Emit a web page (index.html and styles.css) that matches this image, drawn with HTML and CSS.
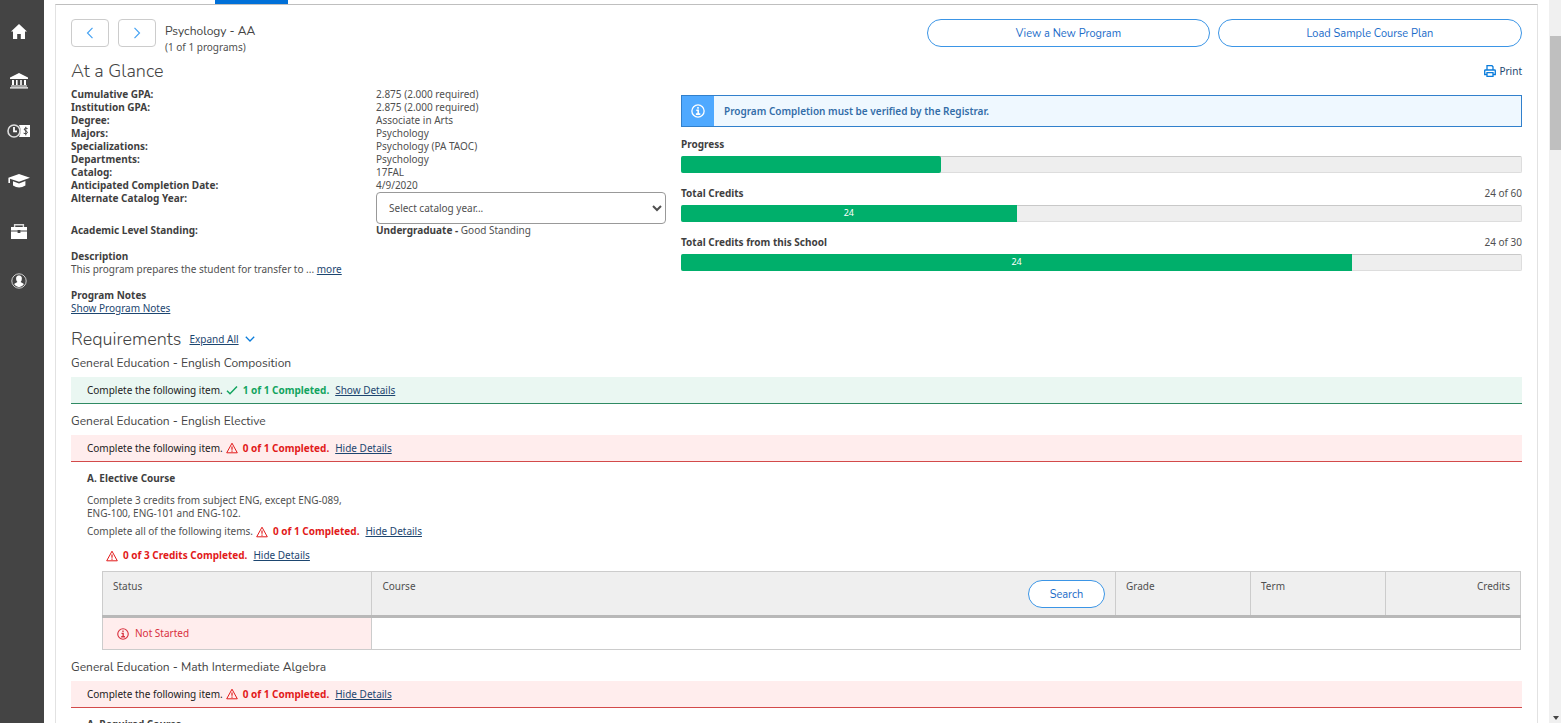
FILE: index.html
```html
<!DOCTYPE html>
<html lang="en">
<head>
    <meta charset="UTF-8">
    <meta name="viewport" content="width=device-width, initial-scale=1.0">
    <title>My Progress</title>
    <link rel="stylesheet" href="styles.css">
</head>
<body>
    <!-- shared icons -->
    <svg class="sprite" aria-hidden="true">
        <symbol id="icon-warning" viewBox="0 0 12 12">
            <path d="M6 1.2 11.3 10.8H.7Z" fill="none" stroke="currentColor" stroke-linejoin="round"/>
            <path d="M6 4.4v3.4M6 8.6v1.1" stroke="currentColor" stroke-width="1.2"/>
        </symbol>
        <symbol id="icon-info" viewBox="0 0 16 16">
            <circle cx="8" cy="8" r="7" fill="none" stroke="currentColor" stroke-width="1.5"/>
            <path d="M8 3.4v2M6 7.2H8.2v4M5.6 11.6h5" fill="none" stroke="currentColor" stroke-width="1.8"/>
        </symbol>
    </svg>

    <nav class="sidebar">
        <a href="#" aria-label="Home">
            <svg width="16" height="15" viewBox="0 0 16 15"><path d="M8 0 16 7.4H14V15H9.8V10H6.2V15H2V7.4H0Z" fill="#fff"/></svg>
        </a>
        <a href="#" aria-label="Financial Information">
            <svg width="20" height="16" viewBox="0 0 20 16"><path d="M10 0 19 4.6V6H1V4.6ZM3 7H5V12H3ZM7 7H8.6V12H7ZM11.2 7H12.8V12H11.2ZM15 7H17V12H15ZM2 12.4H18V13.4H2ZM1 14.2H19V15.6H1Z" fill="#fff"/></svg>
        </a>
        <a href="#" aria-label="Employment">
            <svg width="24" height="14" viewBox="0 0 24 14">
                <circle cx="7" cy="7" r="6" fill="none" stroke="#ddd" stroke-width="1.6"/>
                <path d="M7 3V7.4H10" fill="none" stroke="#fff" stroke-width="1.8"/>
                <path d="M12 1H23V13H12Q15.4 7 12 1Z" fill="#fff"/>
                <path d="M20.6 4.6Q18 3.4 17.2 5C16.8 7 20.8 6.6 20.4 8.8Q19.4 10.6 16.6 9.2M18.8 2.8V11.4" fill="none" stroke="#444"/>
            </svg>
        </a>
        <a href="#" aria-label="Academics">
            <svg width="22" height="14" viewBox="0 0 22 14"><path d="M11 0 22 3.8 11 7.8 2 4.8V9H.4V3.8ZM5 7.2 11 9.4 17.4 7V11.4Q11 15.6 5 11.4Z" fill="#fff"/></svg>
        </a>
        <a href="#" aria-label="Career">
            <svg width="18" height="15" viewBox="0 0 18 15"><path d="M4.6 3V.8H13.4V3" fill="none" stroke="#ddd" stroke-width="1.4"/><path d="M1 3H17V6.6H10.4V6H7.6V6.6H1ZM1 7.6H7.6V9H10.4V7.6H17V15H1Z" fill="#fff"/></svg>
        </a>
        <a href="#" aria-label="User Options">
            <svg width="16" height="16" viewBox="0 0 16 16">
                <circle cx="8" cy="8" r="7.2" fill="none" stroke="#ccc"/>
                <path d="M8 2.4C5 2.4 4.8 5 5.4 7.4L6.4 9 3 11Q5 14.2 8 14.2T13 11L9.6 9 10.6 7.4C11.2 5 11 2.4 8 2.4Z" fill="#fff"/>
            </svg>
        </a>
    </nav>

    <main class="content">
        <div class="tabs"><span class="tab-active"></span></div>

        <div class="panel">
            <header class="program-header">
                <button class="btn-arrow" aria-label="Previous program">
                    <svg width="8" height="12" viewBox="0 0 8 12"><path d="M6.5.8 1.5 6l5 5.2" fill="none" stroke="#47a3f3" stroke-width="1.2"/></svg>
                </button>
                <button class="btn-arrow" aria-label="Next program">
                    <svg width="8" height="12" viewBox="0 0 8 12"><path d="M1.5.8 6.5 6l-5 5.2" fill="none" stroke="#47a3f3" stroke-width="1.2"/></svg>
                </button>
                <div class="program-title">
                    <h2>Psychology - AA</h2>
                    <span>(1 of 1 programs)</span>
                </div>
                <div class="actions">
                    <button class="btn">View a New Program</button>
                    <button class="btn">Load Sample Course Plan</button>
                </div>
            </header>

            <div class="glance-header">
                <h1>At a Glance</h1>
                <a href="#" class="print">
                    <svg width="12" height="12" viewBox="0 0 12 12"><path d="M3 5V.7H8L9 1.8V5M2.6 9.5H.7V5.6Q.7 5 1.4 5H10.6Q11.3 5 11.3 5.6V9.5H9.4M3 7.6H9V11.3H3Z" fill="none" stroke="#0a7cdb" stroke-width="1.3"/></svg>
                    Print
                </a>
            </div>

            <div class="glance">
                <div>
                    <dl class="facts">
                        <dt>Cumulative GPA:</dt><dd>2.875 (2.000 required)</dd>
                        <dt>Institution GPA:</dt><dd>2.875 (2.000 required)</dd>
                        <dt>Degree:</dt><dd>Associate in Arts</dd>
                        <dt>Majors:</dt><dd>Psychology</dd>
                        <dt>Specializations:</dt><dd>Psychology (PA TAOC)</dd>
                        <dt>Departments:</dt><dd>Psychology</dd>
                        <dt>Catalog:</dt><dd>17FAL</dd>
                        <dt>Anticipated Completion Date:</dt><dd>4/9/2020</dd>
                        <dt><label for="catalog-year">Alternate Catalog Year:</label></dt>
                        <dd>
                            <select id="catalog-year">
                                <option>Select catalog year...</option>
                            </select>
                        </dd>
                        <dt>Academic Level Standing:</dt><dd><b>Undergraduate -</b> Good Standing</dd>
                    </dl>
                    <div class="note">
                        <h4>Description</h4>
                        This program prepares the student for transfer to ... <a href="#">more</a>
                    </div>
                    <div class="note">
                        <h4>Program Notes</h4>
                        <a href="#">Show Program Notes</a>
                    </div>
                </div>

                <div class="status">
                    <div class="alert">
                        <span class="alert-icon"><svg width="14" height="14"><use href="#icon-info"/></svg></span>
                        <p>Program Completion must be verified by the Registrar.</p>
                    </div>
                    <div class="meter">
                        <div class="meter-label"><b>Progress</b></div>
                        <div class="bar"><div class="fill rounded" style="width: 31%"></div></div>
                    </div>
                    <div class="meter">
                        <div class="meter-label"><b>Total Credits</b><span>24 of 60</span></div>
                        <div class="bar"><div class="fill" style="width: 40%">24</div></div>
                    </div>
                    <div class="meter">
                        <div class="meter-label"><b>Total Credits from this School</b><span>24 of 30</span></div>
                        <div class="bar"><div class="fill" style="width: 80%">24</div></div>
                    </div>
                </div>
            </div>

            <div class="requirements-header">
                <h1>Requirements</h1>
                <a href="#">Expand All</a>
                <svg width="10" height="6" viewBox="0 0 10 6"><path d="M.8.8 5 5 9.2.8" fill="none" stroke="#0a7cdb" stroke-width="1.3"/></svg>
            </div>

            <section class="requirement">
                <h3>General Education - English Composition</h3>
                <div class="summary complete">
                    Complete the following item.
                    <svg class="icon" width="12" height="12" viewBox="0 0 12 12"><path d="M1 6.8 4 9.8 11 2.6" fill="none" stroke="currentColor" stroke-width="1.5"/></svg>
                    <b>1 of 1 Completed.</b>
                    <a href="#">Show Details</a>
                </div>
            </section>

            <section class="requirement">
                <h3>General Education - English Elective</h3>
                <div class="summary incomplete">
                    Complete the following item.
                    <svg class="icon" width="12" height="12"><use href="#icon-warning"/></svg>
                    <b>0 of 1 Completed.</b>
                    <a href="#">Hide Details</a>
                </div>
                <div class="details">
                    <h4>A. Elective Course</h4>
                    <p>Complete 3 credits from subject ENG, except ENG-089,<br>ENG-100, ENG-101 and ENG-102.</p>
                    <div class="line incomplete">
                        Complete all of the following items.
                        <svg class="icon" width="12" height="12"><use href="#icon-warning"/></svg>
                        <b>0 of 1 Completed.</b>
                        <a href="#">Hide Details</a>
                    </div>
                    <div class="line nested incomplete">
                        <svg class="icon" width="12" height="12"><use href="#icon-warning"/></svg>
                        <b>0 of 3 Credits Completed.</b>
                        <a href="#">Hide Details</a>
                    </div>
                    <table class="courses">
                        <thead>
                            <tr>
                                <th class="col-status">Status</th>
                                <th>
                                    <div class="course-head">Course <button class="btn btn-search">Search</button></div>
                                </th>
                                <th class="col-small">Grade</th>
                                <th class="col-small">Term</th>
                                <th class="col-small credits">Credits</th>
                            </tr>
                        </thead>
                        <tbody>
                            <tr>
                                <td class="not-started">
                                    <div class="state"><svg width="12" height="12"><use href="#icon-info"/></svg> Not Started</div>
                                </td>
                                <td colspan="4"></td>
                            </tr>
                        </tbody>
                    </table>
                </div>
            </section>

            <section class="requirement">
                <h3>General Education - Math Intermediate Algebra</h3>
                <div class="summary incomplete">
                    Complete the following item.
                    <svg class="icon" width="12" height="12"><use href="#icon-warning"/></svg>
                    <b>0 of 1 Completed.</b>
                    <a href="#">Hide Details</a>
                </div>
                <div class="details">
                    <h4>A. Required Course</h4>
                </div>
            </section>
        </div>
    </main>

    <div class="scrollbar">
        <div class="scroll-thumb"></div>
        <svg class="scroll-arrow" width="6" height="4" viewBox="0 0 6 4"><path d="M0 0H6L3 4Z" fill="#444"/></svg>
    </div>
</body>
</html>
```
FILE: styles.css
```css
* {
    box-sizing: border-box;
}

body {
    margin: 0;
    height: 100vh;
    display: flex;
    overflow: hidden;
    font-family: "Noto Sans", "Open Sans", sans-serif;
    font-size: 10px;
    line-height: 13px;
    color: #505050;
    background-color: #fff;
}

h1, h2, h3, h4, p, dl, dd {
    margin: 0;
}

h1, h2, h3 {
    font-family: Nunito, "Open Sans", sans-serif;
    font-weight: 400;
    color: #444;
}

h1 {
    font-size: 18px;
    line-height: 24px;
    font-weight: 300;
}

h2, h3 {
    font-size: 12px;
    line-height: 16px;
}

h4 {
    font-size: 10px;
    line-height: 13px;
}

h4, b, dt {
    font-weight: 700;
    color: #3f3f3f;
}

a {
    color: #1d4670;
}

button {
    font-family: Nunito, "Open Sans", sans-serif;
    cursor: pointer;
}

.sprite {
    display: none;
}

/* sidebar */
.sidebar {
    flex: 0 0 44px;
    padding: 6px 6px 0 0;
    background-color: #444;
}

.sidebar a {
    display: flex;
    align-items: center;
    justify-content: center;
    height: 50px;
}

/* main area */
.content {
    flex: 1;
    min-width: 0;
    overflow: hidden;
    padding: 0 11px;
}

.tabs {
    height: 4px;
    padding-left: 160px;
}

.tab-active {
    display: block;
    width: 73px;
    height: 4px;
    background-color: #0070d8;
}

.panel {
    min-height: 100vh;
    padding: 14px 15px;
    border: 1px solid #e2e2e2;
    border-top-color: #bfbfbf;
}

.program-header {
    display: flex;
    align-items: flex-start;
    height: 40px;
}

.btn-arrow {
    display: flex;
    align-items: center;
    justify-content: center;
    width: 38px;
    height: 28px;
    margin-right: 9px;
    padding: 0;
    background-color: #fff;
    border: 1px solid #ccc;
    border-radius: 4px;
}

.program-title {
    padding-top: 4px;
}

.program-title span {
    display: block;
    line-height: 16px;
}

.actions {
    display: flex;
    gap: 8px;
    width: 41%;
    margin-left: auto;
}

.btn {
    flex: 1 1 auto;
    height: 28px;
    font-size: 11px;
    color: #1b6cc9;
    background-color: #fff;
    border: 1px solid #3b95e6;
    border-radius: 14px;
}

.glance-header {
    display: flex;
    align-items: center;
    justify-content: space-between;
}

.print {
    display: flex;
    align-items: center;
    gap: 3px;
    text-decoration: none;
}

.glance {
    display: grid;
    grid-template-columns: 595fr 841fr;
    gap: 15px;
    padding-top: 5px;
}

.facts {
    display: grid;
    grid-template-columns: 305fr 290fr;
}

select {
    display: block;
    width: 100%;
    height: 32px;
    padding: 0 8px;
    font: inherit;
    color: #505050;
    background-color: #fff;
    border: 1px solid #999;
    border-radius: 4px;
}

.note {
    margin-top: 13px;
}

/* status column */
.status {
    padding-top: 7px;
}

.alert {
    display: flex;
    height: 32px;
    margin-bottom: 11px;
    align-items: stretch;
    background-color: #eff8ff;
    border: 1px solid #3180cc;
}

.alert-icon {
    display: flex;
    align-items: center;
    justify-content: center;
    width: 32px;
    color: #fff;
    background-color: #4fa9ff;
}

.alert p {
    align-self: center;
    padding-left: 10px;
    font-weight: 600;
    color: #336da8;
}

.meter {
    margin-bottom: 14px;
}

.meter-label {
    display: flex;
    justify-content: space-between;
    margin-bottom: 5px;
}

.bar {
    height: 17px;
    background-color: #eee;
    border: 1px solid #ddd;
    border-top-color: #c8c8c8;
    border-radius: 2px;
}

.fill {
    height: 17px;
    margin: -1px;
    font-size: 9px;
    line-height: 15px;
    text-align: center;
    color: #fff;
    background-color: #00af6b;
    border-radius: 2px 0 0 2px;
}

.fill.rounded {
    border-radius: 2px;
}

/* requirements */
.requirements-header {
    display: flex;
    align-items: center;
    margin-top: 12px;
}

.requirements-header a {
    margin: 0 6px 0 8px;
}

.requirement h3 {
    padding: 4px 0 6px;
}

.requirement {
    margin-bottom: 5px;
}

.summary {
    display: flex;
    align-items: center;
    height: 27px;
    padding-left: 16px;
    color: #222;
    border-bottom: 1px solid;
}

.summary.complete {
    background-color: #eaf7f2;
    border-color: #2f8a63;
}

.summary.incomplete {
    background-color: #ffeded;
    border-color: #d34a4a;
}

.icon {
    margin: 0 5px 0 3px;
}

.summary a, .line a {
    margin-left: 6px;
}

.complete .icon, .complete b {
    color: #12a45f;
}

.incomplete .icon, .incomplete b {
    color: #e21a1a;
}

.details {
    padding: 10px 0 0 16px;
}

.details p {
    padding: 9px 0 5px;
}

.line {
    display: flex;
    align-items: center;
}

.line.nested {
    padding: 11px 0 9px 16px;
}

.courses {
    width: calc(100% - 16px);
    margin: 0 1px 0 15px;
    table-layout: fixed;
    border-collapse: collapse;
    border: 1px solid #ccc;
}

.courses th {
    height: 45px;
    padding: 8px 10px 0;
    font-weight: 400;
    text-align: left;
    vertical-align: top;
    background-color: #efefef;
    border: 1px solid #ccc;
    border-bottom: 3px solid #b8b8b8;
}

.courses td {
    height: 33px;
    padding: 0 14px;
    border: 1px solid #ccc;
}

.courses .col-status {
    width: 19%;
}

.courses .col-small {
    width: 135px;
}

.courses .credits {
    text-align: right;
}

.course-head {
    display: flex;
    justify-content: space-between;
}

.btn-search {
    flex: 0 0 77px;
}

.courses .not-started {
    color: #d9303e;
    background-color: #ffeded;
}

.state {
    display: flex;
    align-items: center;
    gap: 6px;
}

/* scrollbar */
.scrollbar {
    display: flex;
    flex-direction: column;
    flex: 0 0 12px;
    padding: 36px 0 3px 1px;
    background-color: #f0f0f0;
}

.scroll-thumb {
    height: 114px;
    background-color: #bfbfbf;
}

.scroll-arrow {
    margin: auto 0 0 3px;
}
```
